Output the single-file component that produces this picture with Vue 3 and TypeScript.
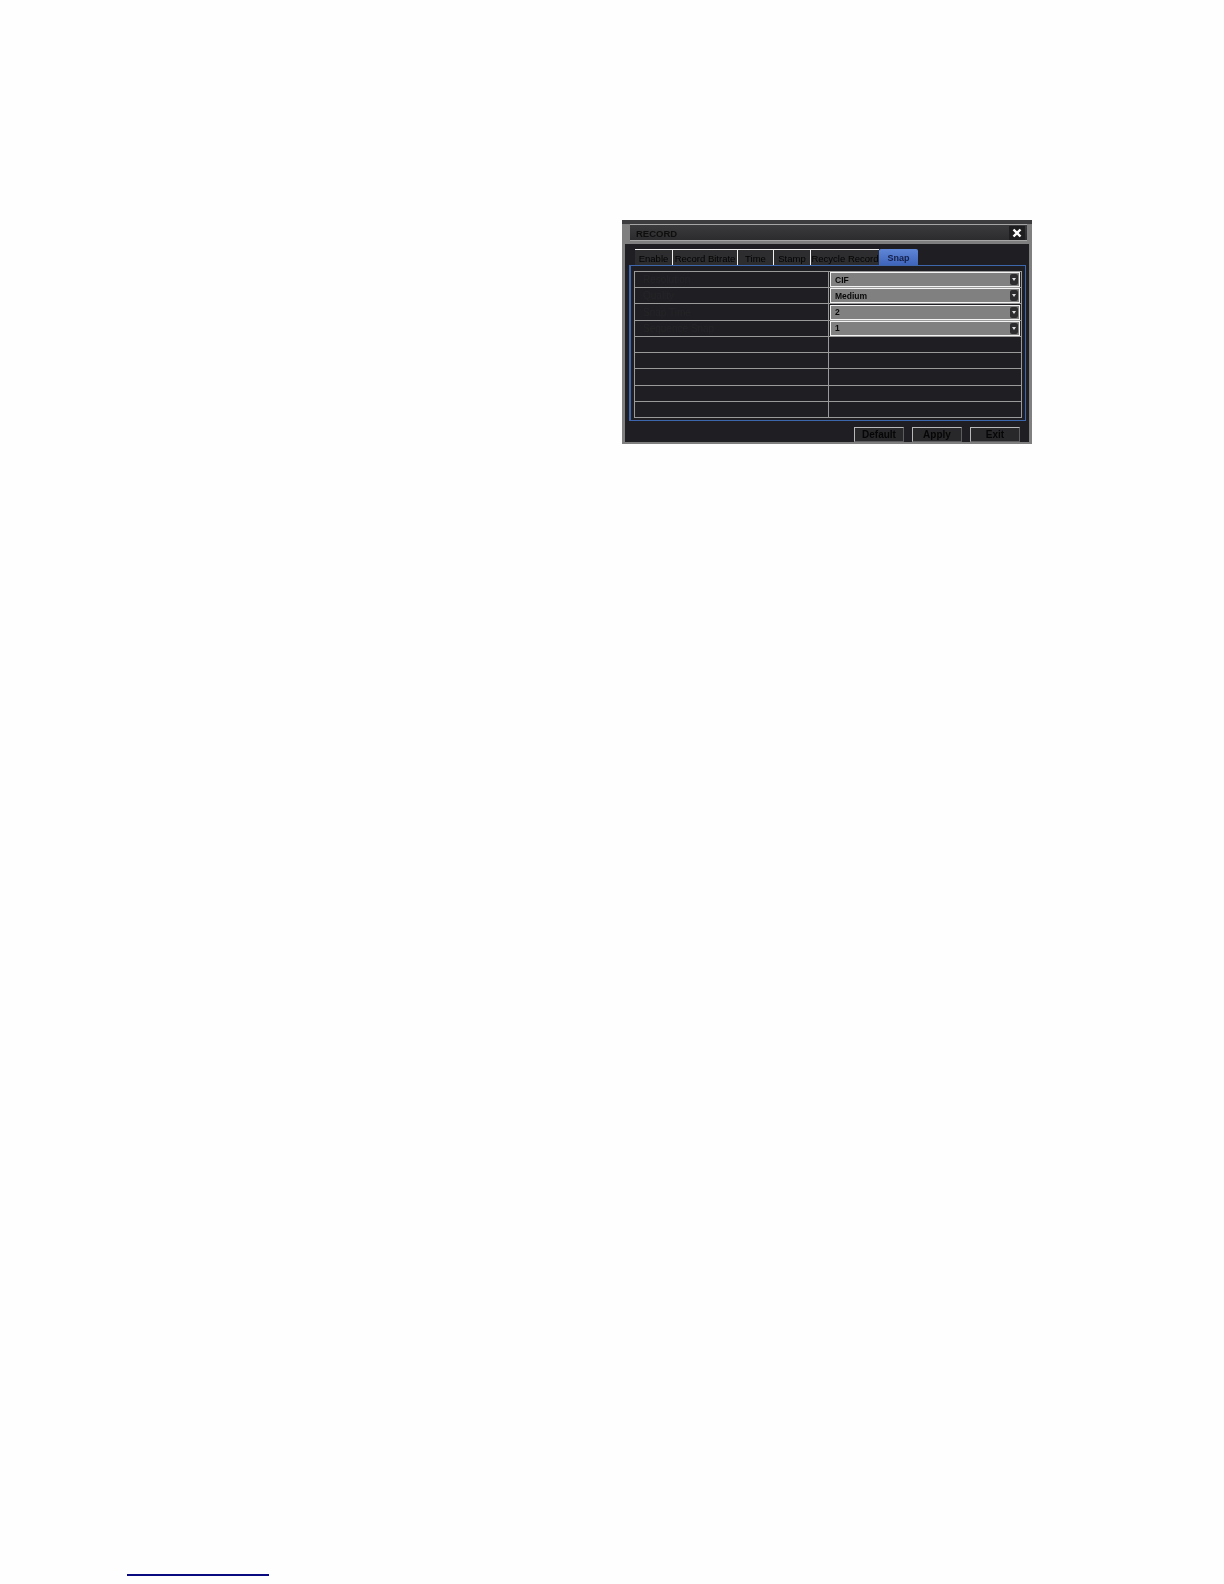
<script setup lang="ts">
const tabs: string[] = ['Enable', 'Record Bitrate', 'Time', 'Stamp', 'Recycle Record']
const rows: { label: string; value: string }[] = [
  { label: 'Resolution', value: 'CIF' },
  { label: 'Quality', value: 'Medium' },
  { label: 'Snap Time', value: '2' },
  { label: 'Sequence Snap', value: '1' },
  { label: '', value: '' },
  { label: '', value: '' },
  { label: '', value: '' },
  { label: '', value: '' },
  { label: '', value: '' }
]
const buttons: string[] = ['Default', 'Apply', 'Exit']
</script>

<template>
  <div class="page">
    <section class="window">
      <header class="titlebar">
        <span class="title soft">RECORD</span>
        <span class="close">
          <svg width="10" height="10" viewBox="0 0 10 10">
            <path d="M1.5 1.5 8.5 8.5M8.5 1.5 1.5 8.5" stroke="#fff" stroke-width="2.4" />
          </svg>
        </span>
      </header>
      <div class="body">
        <nav class="tabs">
          <span v-for="t in tabs" :key="t" class="tab"><span class="soft">{{ t }}</span></span>
          <span class="tab active"><span class="soft">Snap</span></span>
        </nav>
        <div class="panel">
          <div class="table">
            <div v-for="(r, i) in rows" :key="i" class="row">
              <div class="cell label"><span class="soft">{{ r.label }}</span></div>
              <div class="cell value">
                <div v-if="r.value" class="select">
                  <span class="soft">{{ r.value }}</span>
                  <span class="arrow">
                    <svg width="4" height="3" viewBox="0 0 4 3"><path d="M0 0h4L2 3z" fill="#ddd" /></svg>
                  </span>
                </div>
              </div>
            </div>
          </div>
        </div>
        <div class="actions">
          <span v-for="b in buttons" :key="b" class="btn"><span class="soft">{{ b }}</span></span>
        </div>
      </div>
    </section>
    <div class="footer-link"></div>
  </div>
</template>

<style>
html, body { margin: 0; background: #fefefe; }
</style>

<style scoped>
.page {
  width: 1224px;
  height: 1584px;
  box-sizing: border-box;
  padding: 220px 0 0 622px;
  position: relative;
  background: #fefefe;
  font-family: "Liberation Sans", Arial, sans-serif;
  overflow: hidden;
}
.soft { display: inline-block; filter: blur(0.7px); }
.window {
  width: 410px;
  height: 224px;
  box-sizing: border-box;
  background: #7f7f7f;
  border-top: 4px solid #3c3c3e;
  display: flex;
  flex-direction: column;
}
.titlebar {
  width: 397px;
  height: 17px;
  box-sizing: border-box;
  margin: 0 0 3px 8px;
  padding: 1px 2px 0 6px;
  border-top: 1px solid #a5a5a5;
  border-bottom: 1px solid #a5a5a5;
  background: linear-gradient(#3b3b3d, #2c2c2e);
  display: flex;
  align-items: center;
  justify-content: space-between;
}
.title { font-size: 9.5px; font-weight: 700; color: #0e0e0e; }
.close {
  width: 16px;
  height: 14px;
  margin-top: -1px;
  background: #1e1e20;
  display: flex;
  align-items: center;
  justify-content: center;
}
.body {
  width: 404px;
  margin-left: 3px;
  flex: 1;
  box-sizing: border-box;
  margin-bottom: 2px;
  background: #1f1f23;
  padding: 5px 3px 0 4px;
  display: flex;
  flex-direction: column;
}
.tabs { display: flex; height: 16px; padding-left: 6px; }
.tab {
  box-sizing: border-box;
  height: 16px;
  padding: 3px 0 0;
  font-size: 9.5px;
  line-height: 12px;
  text-align: center;
  color: #030303;
  background: #2d2d30;
  border-top: 1px solid #f0f0f0;
  border-left: 1px solid #f0f0f0;
  white-space: nowrap;
}
.tab:nth-child(1) { width: 37px; border-left: 0; }
.tab:nth-child(2) { width: 65px; }
.tab:nth-child(3) { width: 36px; }
.tab:nth-child(4) { width: 37px; }
.tab:nth-child(5) { width: 69px; }
.tab.active {
  width: 39px;
  border: 0;
  font-size: 9px;
  font-weight: 700;
  color: #14204a;
  background: linear-gradient(#5f86d6, #3f65bb);
  border-radius: 2px 2px 0 0;
}
.panel {
  box-sizing: border-box;
  height: 156px;
  padding: 5px 3px 2px 3px;
  border: 1px solid #3d66ad;
  border-left-width: 2px;
}
.table {
  height: 147px;
  box-sizing: border-box;
  border: 1px solid #9a9a9a;
  display: flex;
  flex-direction: column;
}
.row { flex: 1; display: grid; grid-template-columns: 193px 1fr; border-bottom: 1px solid #9a9a9a; }
.row:last-child { border-bottom: 0; }
.cell { display: flex; align-items: center; min-width: 0; }
.label { padding-left: 8px; font-size: 10px; color: #252528; }
.value { border-left: 1px solid #9a9a9a; padding: 0 1px 0 1px; }
.select {
  flex: 1;
  height: 15px;
  box-sizing: border-box;
  border: 1px solid #f2f2f2;
  background: #808080;
  display: flex;
  align-items: center;
  justify-content: space-between;
  padding: 0 1px 0 4px;
  font-size: 8.5px;
  font-weight: 700;
  color: #080808;
}
.arrow {
  width: 8px;
  height: 11px;
  background: #2d2d2f;
  border-radius: 2px;
  display: flex;
  align-items: center;
  justify-content: center;
}
.actions { display: flex; justify-content: flex-end; gap: 8px; padding: 6px 6px 0 0; }
.btn {
  width: 50px;
  height: 15px;
  box-sizing: border-box;
  border: 1px solid #5c5c5e;
  border-top-color: #b8b8b8;
  border-left-color: #b8b8b8;
  background: #28282b;
  font-size: 10px;
  font-weight: 700;
  line-height: 13px;
  text-align: center;
  color: #060606;
}
.footer-link {
  position: absolute;
  left: 127px;
  top: 1574px;
  width: 142px;
  height: 1.5px;
  background: #0a0a80;
}
</style>
